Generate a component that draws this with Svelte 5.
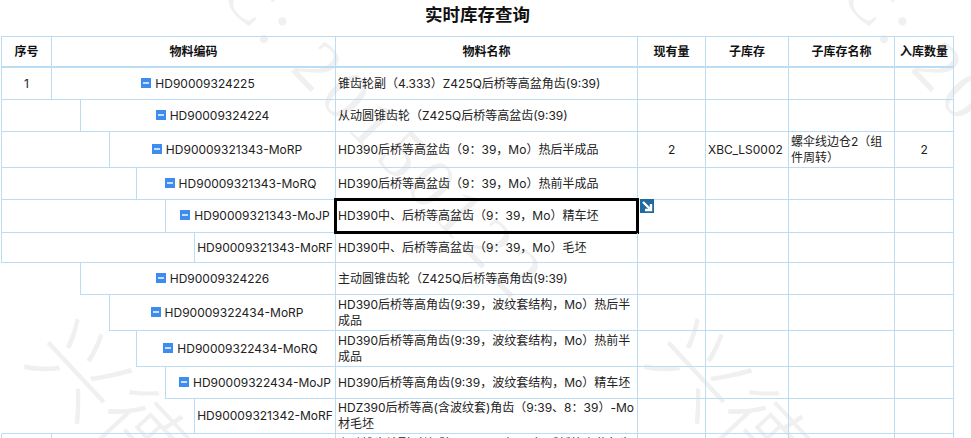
<script>
  const colWidths = [51, 29, 29, 27, 29, 29, 141, 302, 68, 83, 106, 59];
  const rows = [
    { h: 32, depth: 0, seq: '1', code: 'HD90009324225', name: '锥齿轮副（4.333）Z425Q后桥等高盆角齿(9:39)', icon: true },
    { h: 32, depth: 2, code: 'HD90009324224', name: '从动圆锥齿轮（Z425Q后桥等高盆齿(9:39)', icon: true, lined: true },
    { h: 36, depth: 3, code: 'HD90009321343-MoRP', name: 'HD390后桥等高盆齿（9：39，Mo）热后半成品', icon: true, lined: true, qty: '2', sub: 'XBC_LS0002', subName: '螺伞线边仓2（组件周转）', inQty: '2' },
    { h: 32, depth: 4, code: 'HD90009321343-MoRQ', name: 'HD390后桥等高盆齿（9：39，Mo）热前半成品', icon: true, lined: true },
    { h: 33, depth: 5, code: 'HD90009321343-MoJP', name: 'HD390中、后桥等高盆齿（9：39，Mo）精车坯', icon: true, lined: true, selected: true },
    { h: 30, depth: 6, code: 'HD90009321343-MoRF', name: 'HD390中、后桥等高盆齿（9：39，Mo）毛坯', lined: true },
    { h: 32, depth: 2, code: 'HD90009324226', name: '主动圆锥齿轮（Z425Q后桥等高角齿(9:39)', icon: true },
    { h: 36, depth: 3, code: 'HD90009322434-MoRP', name: 'HD390后桥等高角齿(9:39，波纹套结构，Mo）热后半成品', icon: true },
    { h: 36, depth: 4, code: 'HD90009322434-MoRQ', name: 'HD390后桥等高角齿(9:39，波纹套结构，Mo）热前半成品', icon: true },
    { h: 32, depth: 5, code: 'HD90009322434-MoJP', name: 'HD390后桥等高角齿(9:39，波纹套结构，Mo）精车坯', icon: true },
    { h: 34, depth: 6, code: 'HD90009321342-MoRF', name: 'HDZ390后桥等高(含波纹套)角齿（9:39、8：39）-Mo材毛坯', closed: true },
    { h: 36, depth: 0, seq: '', code: '', name: '主动锥齿轮副（总成）Z425Q（9:39）后桥等高盆角齿总成Mo半成品总成' }
  ];
  const tiles = [0, 620];
</script>

<div class="page">
  <div class="wm" aria-hidden="true">
    {#each tiles as x}
      <div class="tile" style:left="{x}px">
        <span class="wm-name">兴德</span>
        <span class="wm-date">C: 20150122</span>
      </div>
    {/each}
  </div>

  <h1>实时库存查询</h1>

  <table>
    <colgroup>
      {#each colWidths as w}<col style:width="{w}px" />{/each}
    </colgroup>
    <thead>
      <tr class="head">
        <th>序号</th>
        <th colspan="6">物料编码</th>
        <th>物料名称</th>
        <th>现有量</th>
        <th>子库存</th>
        <th>子库存名称</th>
        <th>入库数量</th>
      </tr>
    </thead>
    <tbody>
      {#each rows as r}
        <tr style:height="{r.h}px">
          {#if r.depth === 0}
            <td class="ctr">{r.seq}</td>
          {:else}
            <td colspan={r.depth} class:open={!r.lined && !r.closed} class:closed={r.closed} class="blank"></td>
          {/if}
          <td class="code" colspan={r.depth === 0 ? 6 : 7 - r.depth}>
            {#if r.icon}<span class="toggle"></span>{/if}{r.code}
          </td>
          <td class="name">
            {r.name}
            {#if r.selected}
              <span class="selection"></span>
              <span class="handle">
                <svg viewBox="0 0 14 14" width="14" height="14">
                  <rect width="14" height="14" fill="#1f6a9f" />
                  <path d="M3 3 L9.5 9.5 M11 5 V11 H5" fill="none" stroke="#fff" stroke-width="2.4" />
                </svg>
              </span>
            {/if}
          </td>
          <td class="ctr">{r.qty ?? ''}</td>
          <td>{r.sub ?? ''}</td>
          <td>{r.subName ?? ''}</td>
          <td class="ctr">{r.inQty ?? ''}</td>
        </tr>
      {/each}
    </tbody>
  </table>
</div>

<style>
  :global(html), :global(body) {
    margin: 0;
    overflow: hidden;
    background: #fff;
  }
  .page {
    position: relative;
    height: 438px;
    overflow: hidden;
    font-family: Inter, "Noto Sans CJK SC", sans-serif;
    font-size: 12px;
    line-height: 16px;
    color: #222;
  }
  .wm {
    position: absolute;
    inset: 0;
    z-index: 0;
  }
  .tile {
    position: absolute;
    top: 0;
    width: 620px;
    height: 438px;
  }
  .wm-name,
  .wm-date {
    position: absolute;
    white-space: nowrap;
    color: #f0f0f0;
    transform-origin: left top;
  }
  .wm-name {
    left: 86px;
    top: 300px;
    font: 300 92px/1 "Noto Sans CJK SC", sans-serif;
    transform: rotate(47deg);
  }
  .wm-date {
    left: 260px;
    top: -44px;
    font: 70px/1 "Liberation Serif", serif;
    letter-spacing: 6px;
    transform: rotate(46deg);
  }
  h1 {
    position: relative;
    z-index: 1;
    margin: 0;
    height: 36px;
    width: 955px;
    text-align: center;
    font-size: 17.5px;
    line-height: 30px;
    font-weight: 700;
    color: #111;
  }
  table {
    position: relative;
    z-index: 1;
    margin-left: 1px;
    width: 953px;
    table-layout: fixed;
    border-collapse: separate;
    border-spacing: 0;
  }
  th, td {
    box-sizing: border-box;
    padding: 1px 2px;
    border-right: 1px solid #bcdcf4;
    border-bottom: 1px solid #bcdcf4;
    overflow-wrap: anywhere;
  }
  tr > :first-child {
    border-left: 1px solid #bcdcf4;
  }
  .head {
    height: 32px;
  }
  th {
    border-top: 1px solid #bcdcf4;
    border-bottom-width: 2px;
    font-weight: 700;
    color: #111;
    text-align: center;
  }
  .ctr,
  .code {
    text-align: center;
  }
  .code {
    white-space: nowrap;
  }
  .name {
    position: relative;
  }
  tr > .blank.open {
    border-left: 0;
    border-bottom: 0;
  }
  tr > .blank.closed {
    border-left-color: transparent;
  }
  .toggle {
    display: inline-block;
    box-sizing: border-box;
    width: 10px;
    height: 10px;
    margin: 0 4px 0 9px;
    background: linear-gradient(#c9defb, #c9defb) center / 6px 2px no-repeat #3f8cf0;
  }
  .selection {
    position: absolute;
    left: -2px;
    top: -2px;
    box-sizing: border-box;
    width: 305px;
    height: 36px;
    border: 3px solid #000;
  }
  .handle {
    position: absolute;
    left: 304px;
    top: -1px;
    display: block;
    width: 14px;
    height: 14px;
    line-height: 0;
  }
</style>
